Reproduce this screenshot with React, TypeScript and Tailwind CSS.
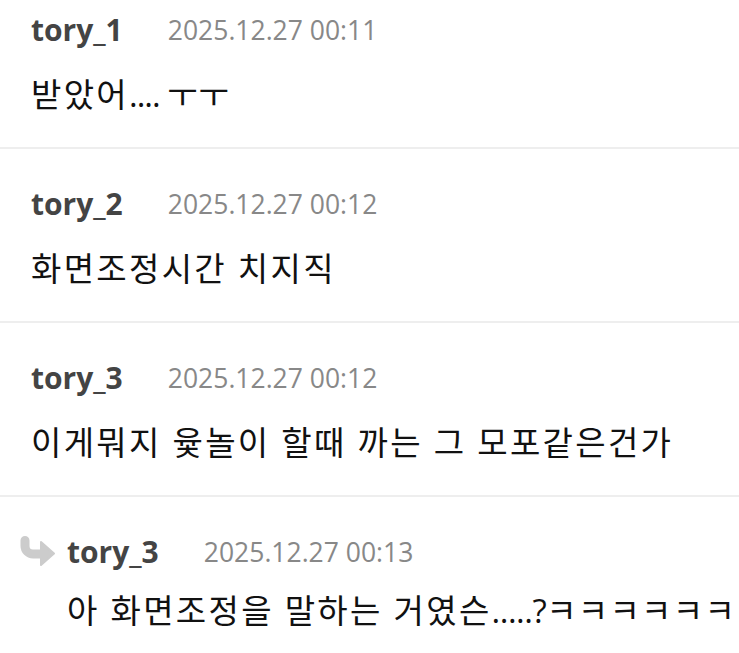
import React from "react";

interface commentProps {
  name: string;
  date: string;
  text: React.ReactNode;
  reply?: boolean;
}

const ReplyArrow = () => (
  <svg width="36" height="31" viewBox="0 0 36 31" className="shrink-0">
    <path
      d="M6 4.5 V10 A8 8 0 0 0 14 18 H25"
      fill="none"
      stroke="#cccccc"
      strokeWidth="9"
      strokeLinecap="round"
    />
    <path
      d="M22 6 L35 17.5 L22 29 Z"
      fill="#cccccc"
      stroke="#cccccc"
      strokeWidth="2"
      strokeLinejoin="round"
    />
  </svg>
);

const Comment = ({ name, date, text, reply }: commentProps) => {
  return (
    <div className="border-b-2 border-[#eeeeee] pt-[34px] pb-[30px] pr-2">
      <div className={`flex items-center h-[42px] ${reply ? "pl-[19px]" : "pl-[31px]"}`}>
        {reply && (
          <div className="mr-[12px] -mt-[2px]">
            <ReplyArrow />
          </div>
        )}
        <span className="text-[30px] font-bold text-[#444444] leading-none">{name}</span>
        <span className="ml-[45px] text-[26.5px] text-[#888888] leading-none">{date}</span>
      </div>
      <p
        className={`${reply ? "mt-[16px] pl-[67px]" : "mt-[22px] pl-[31px]"} text-[33px] tracking-[2.3px] text-[#111111] leading-[44px] whitespace-nowrap`}
      >
        {text}
      </p>
    </div>
  );
};

export default function App() {
  return (
    <div
      className="w-[739px] h-[653px] overflow-hidden bg-white"
      style={{ fontFamily: '"Open Sans", "Noto Sans CJK KR", sans-serif' }}
    >
      <div className="-mt-[25px]">
        <Comment
          name="tory_1"
          date="2025.12.27 00:11"
          text={
            <>
              받았어<span className="tracking-[-1px]">.... </span>
              <span className="tracking-[1px]">ㅜㅜ</span>
            </>
          }
        />
        <Comment name="tory_2" date="2025.12.27 00:12" text="화면조정시간 치지직" />
        <Comment name="tory_3" date="2025.12.27 00:12" text="이게뭐지 윷놀이 할때 까는 그 모포같은건가" />
        <Comment
          name="tory_3"
          date="2025.12.27 00:13"
          reply
          text={
            <>
              아 화면조정을 말하는 거였슨<span className="tracking-[-0.5px]">.....?</span>
              <span className="tracking-[1.3px]">ㅋㅋㅋㅋㅋㅋ</span>
            </>
          }
        />
      </div>
    </div>
  );
}
